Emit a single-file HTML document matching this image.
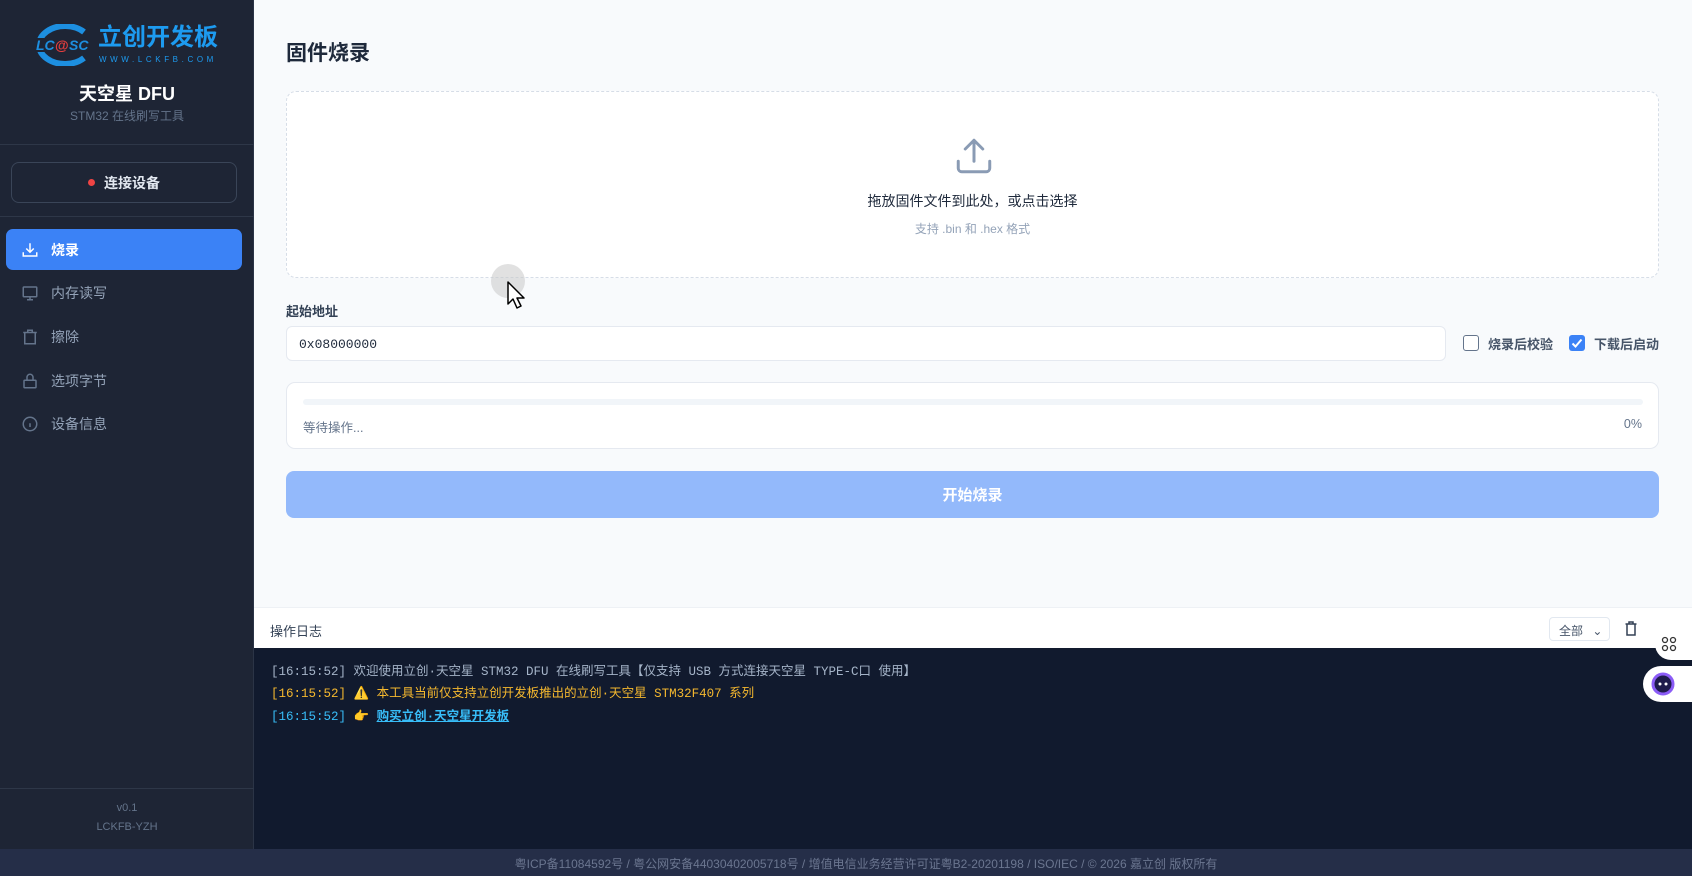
<!DOCTYPE html>
<html><head><meta charset="utf-8"><style>
*{box-sizing:border-box;margin:0;padding:0}
body{width:1692px;height:876px;overflow:hidden;font-family:"Liberation Sans","Noto Sans CJK SC",sans-serif;background:#f8fafc;position:relative}
.sb{position:absolute;left:0;top:0;width:254px;height:849px;background:#1e2535;border-right:1px solid #2b3446}
.main{position:absolute;left:254px;top:0;right:0;height:607px;background:#f8fafc}
.abs{position:absolute}
.nav{position:absolute;left:6px;width:236px;height:41px;border-radius:7px;color:#94a3b8;font-size:14px;display:flex;align-items:center;padding-left:15px}
.nav svg{margin-right:12px}
.mono{font-family:"Liberation Mono","Noto Sans CJK SC",monospace;font-size:12.5px}
</style></head><body>
<div class="sb">
 <svg class="abs" style="left:34px;top:24px" width="60" height="42" viewBox="0 0 60 42"><path d="M50 8 A26 19 0 1 0 50 34" fill="none" stroke="#1d8fe0" stroke-width="6"/><rect x="0" y="14" width="60" height="14" fill="#1e2535"/><text x="2" y="26" font-size="14" font-style="italic" font-weight="bold" fill="#1d8fe0" font-family="Liberation Sans">LC</text><text x="21" y="26" font-size="14" font-weight="bold" fill="#e53e3e" font-family="Liberation Sans">@</text><text x="35" y="26" font-size="14" font-style="italic" font-weight="bold" fill="#1d8fe0" font-family="Liberation Sans">SC</text></svg>
 <div class="abs" style="left:98px;top:23px;font-size:24px;font-weight:bold;color:#1d9bf0;white-space:nowrap;line-height:30px">立创开发板</div>
 <div class="abs" style="left:99px;top:55px;font-size:8px;color:#1d9bf0;letter-spacing:3.6px;white-space:nowrap">WWW.LCKFB.COM</div>
 <div class="abs" style="left:0;width:254px;top:80px;text-align:center;color:#fff;font-weight:bold;font-size:18px">天空星 DFU</div>
 <div class="abs" style="left:0;width:254px;top:107px;text-align:center;color:#64748b;font-size:12px">STM32 在线刷写工具</div>
 <div class="abs" style="left:0;width:254px;top:144px;border-top:1px solid #2e3748"></div>
 <div class="abs" style="left:11px;top:162px;width:226px;height:41px;border:1px solid #3a4558;border-radius:8px;color:#e2e8f0;font-weight:bold;font-size:14px;display:flex;align-items:center;justify-content:center"><span style="width:7px;height:7px;border-radius:50%;background:#ef4444;margin-right:9px"></span>连接设备</div>
 <div class="abs" style="left:0;width:254px;top:216px;border-top:1px solid #2e3748"></div>
 <div class="nav" style="top:229px;background:#3b82f6;color:#fff;font-weight:bold"><svg width="18" height="18" viewBox="0 0 24 24" fill="none" stroke="#fff" stroke-width="2"><path d="M3 15v5h18v-5M12 3v12M7 10l5 5 5-5"/></svg>烧录</div>
 <div class="nav" style="top:272px"><svg width="18" height="18" viewBox="0 0 24 24" fill="none" stroke="#64748b" stroke-width="2"><rect x="3" y="4" width="18" height="13" rx="1"/><path d="M12 17v4M8 21h8"/></svg>内存读写</div>
 <div class="nav" style="top:316px"><svg width="18" height="18" viewBox="0 0 24 24" fill="none" stroke="#64748b" stroke-width="2"><path d="M5 6h14v15H5zM3 6h18M9 6V3h6v3"/></svg>擦除</div>
 <div class="nav" style="top:360px"><svg width="18" height="18" viewBox="0 0 24 24" fill="none" stroke="#64748b" stroke-width="2"><rect x="4" y="11" width="16" height="10" rx="1"/><path d="M8 11V7a4 4 0 0 1 8 0v4"/></svg>选项字节</div>
 <div class="nav" style="top:403px"><svg width="18" height="18" viewBox="0 0 24 24" fill="none" stroke="#64748b" stroke-width="2"><circle cx="12" cy="12" r="9"/><path d="M12 11v5"/></svg>设备信息</div>
 <div class="abs" style="left:0;width:254px;top:788px;border-top:1px solid #2e3748"></div>
 <div class="abs" style="left:0;width:254px;top:802px;text-align:center;color:#64748b;font-size:11px">v0.1</div>
 <div class="abs" style="left:0;width:254px;top:821px;text-align:center;color:#64748b;font-size:11px">LCKFB-YZH</div>
</div>
<div class="main">
 <div class="abs" style="left:32px;top:37px;font-size:21px;font-weight:bold;color:#1e293b">固件烧录</div>
 <div class="abs" style="left:32px;top:91px;width:1373px;height:187px;border:1.5px dashed #d6dde7;border-radius:10px;background:#fff">
  <svg class="abs" style="left:666px;top:43px" width="42" height="42" viewBox="0 0 24 24" fill="none" stroke="#8a9bb4" stroke-width="1.7" stroke-linecap="round" stroke-linejoin="round"><path d="M3 15v4a2 2 0 0 0 2 2h14a2 2 0 0 0 2-2v-4M12 3v12M7 8l5-5 5 5"/></svg>
  <div class="abs" style="left:0;width:100%;top:99px;text-align:center;font-size:14px;color:#1e293b">拖放固件文件到此处，或点击选择</div>
  <div class="abs" style="left:0;width:100%;top:128px;text-align:center;font-size:12px;color:#94a3b8">支持 .bin 和 .hex 格式</div>
 </div>
 <div class="abs" style="left:32px;top:301px;font-size:13px;color:#334155;font-weight:bold">起始地址</div>
 <div class="abs mono" style="left:32px;top:326px;width:1160px;height:35px;border:1px solid #e5e9f0;border-radius:6px;background:#fff;padding:10px 12px;color:#1e293b;font-size:13px">0x08000000</div>
 <div class="abs" style="left:1209px;top:335px;width:16px;height:16px;border:1.5px solid #64748b;border-radius:3px;background:#fff"></div>
 <div class="abs" style="left:1234px;top:334px;font-size:13px;color:#475569;font-weight:bold">烧录后校验</div>
 <div class="abs" style="left:1315px;top:335px;width:16px;height:16px;border-radius:3px;background:#3b82f6"><svg width="16" height="16" viewBox="0 0 16 16"><path d="M3.5 8.5l3 3 6-7" stroke="#fff" stroke-width="2" fill="none"/></svg></div>
 <div class="abs" style="left:1340px;top:334px;font-size:13px;color:#475569;font-weight:bold">下载后启动</div>
 <div class="abs" style="left:32px;top:382px;width:1373px;height:67px;border:1px solid #e5e9f0;border-radius:9px;background:#fff">
  <div class="abs" style="left:16px;top:16px;width:1340px;height:6px;border-radius:3px;background:#f1f5f9"></div>
  <div class="abs" style="left:16px;top:34px;font-size:12.5px;color:#64748b">等待操作...</div>
  <div class="abs" style="right:16px;top:34px;font-size:12.5px;color:#64748b">0%</div>
 </div>
 <div class="abs" style="left:32px;top:471px;width:1373px;height:47px;border-radius:8px;background:#93b9fb;color:#fff;font-weight:bold;font-size:15px;display:flex;align-items:center;justify-content:center">开始烧录</div>
 <div class="abs" style="left:237px;top:264px;width:34px;height:34px;border-radius:50%;background:rgba(200,200,200,.55)"></div>
 <svg class="abs" style="left:252px;top:280px" width="22" height="30" viewBox="0 0 22 30"><path d="M2 2v22l5-5 4 9 4-2-4-8h7z" fill="#fff" stroke="#000" stroke-width="1.5" stroke-linejoin="round"/></svg>
</div>
<div class="abs" style="left:254px;top:607px;width:1438px;height:41px;background:#fff;border-top:1px solid #eef1f5">
 <div class="abs" style="left:16px;top:13px;font-size:13px;color:#334155">操作日志</div>
 <div class="abs" style="left:1295px;top:9px;width:61px;height:24px;border:1px solid #e2e8f0;border-radius:4px;font-size:12px;color:#475569;padding:4px 0 0 9px">全部 <span style="margin-left:6px">⌄</span></div>
 <svg class="abs" style="left:1370px;top:13px" width="14" height="15" viewBox="0 0 14 15" fill="none" stroke="#334155" stroke-width="1.5"><path d="M3 3h8v11H3zM1.5 3h11M5 3V1h4v2"/></svg>
</div>
<div class="abs" style="left:254px;top:648px;width:1438px;height:201px;background:#111a2e">
 <div class="abs mono" style="left:17px;top:12px;color:#a5b4c8;white-space:nowrap">[16:15:52] 欢迎使用立创·天空星 STM32 DFU 在线刷写工具【仅支持 USB 方式连接天空星 TYPE-C口 使用】</div>
 <div class="abs mono" style="left:17px;top:34px;color:#f5b82e;white-space:nowrap">[16:15:52] ⚠️ 本工具当前仅支持立创开发板推出的立创·天空星 STM32F407 系列</div>
 <div class="abs mono" style="left:17px;top:57px;color:#38bdf8;white-space:nowrap">[16:15:52] 👉 <b style="text-decoration:underline">购买立创·天空星开发板</b></div>
</div>
<div class="abs" style="left:1655px;top:628px;width:37px;height:32px;background:#fff;border-radius:18px 0 0 18px"><svg style="margin:8px 0 0 6px" width="16" height="16" viewBox="0 0 16 16" fill="none" stroke="#333" stroke-width="1.3"><circle cx="4" cy="4" r="2.5"/><circle cx="12" cy="4" r="2.5"/><circle cx="4" cy="12" r="2.5"/><circle cx="12" cy="12" r="2.5"/></svg></div>
<div class="abs" style="left:1643px;top:666px;width:49px;height:36px;background:#fff;border-radius:18px 0 0 18px"><svg style="margin:6px 0 0 8px" width="24" height="24" viewBox="0 0 24 24"><circle cx="12" cy="12" r="10" fill="#1e1b4b" stroke="#8b5cf6" stroke-width="3"/><circle cx="9" cy="12" r="1.5" fill="#fff"/><circle cx="15" cy="12" r="1.5" fill="#fff"/></svg></div>
<div class="abs" style="left:0;top:849px;width:1692px;height:27px;background:#252e48;color:#6b7690;font-size:12px;text-align:center;padding-top:6px;padding-left:40px">粤ICP备11084592号 / 粤公网安备44030402005718号 / 增值电信业务经营许可证粤B2-20201198 / ISO/IEC / © 2026 嘉立创 版权所有</div>
</body></html>
